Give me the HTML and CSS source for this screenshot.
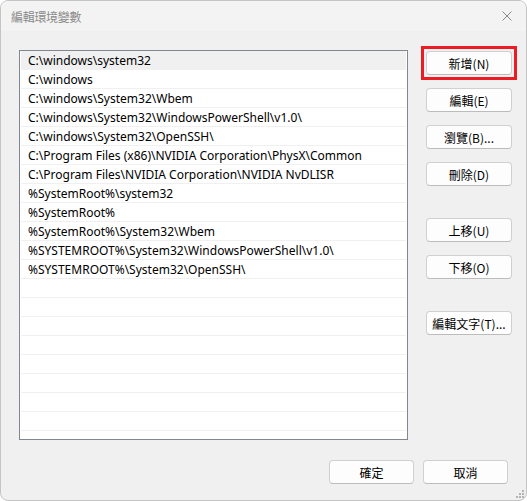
FILE: index.html
```html
<!DOCTYPE html>
<html lang="zh-Hant">
    <head>
        <meta charset="UTF-8">
        <title>編輯環境變數</title>
        <link rel="stylesheet" href="styles.css">
    </head>
    <body>
        <div class="janela">
            <div class="titulo">
                <span>編輯環境變數</span>
                <svg class="fechar" width="10" height="10" viewBox="0 0 10 10">
                    <path d="M0.5 0.5 L9.5 9.5 M9.5 0.5 L0.5 9.5" stroke="#8a8a8a" stroke-width="1" fill="none"/>
                </svg>
            </div>
            <div class="conteudo">
                <div class="principal">
                    <ul class="lista">
                        <li class="selecionado">C:\windows\system32</li>
                        <li>C:\windows</li>
                        <li>C:\windows\System32\Wbem</li>
                        <li>C:\windows\System32\WindowsPowerShell\v1.0\</li>
                        <li>C:\windows\System32\OpenSSH\</li>
                        <li>C:\Program Files (x86)\NVIDIA Corporation\PhysX\Common</li>
                        <li>C:\Program Files\NVIDIA Corporation\NVIDIA NvDLISR</li>
                        <li>%SystemRoot%\system32</li>
                        <li>%SystemRoot%</li>
                        <li>%SystemRoot%\System32\Wbem</li>
                        <li>%SYSTEMROOT%\System32\WindowsPowerShell\v1.0\</li>
                        <li>%SYSTEMROOT%\System32\OpenSSH\</li>
                        <li></li><li></li><li></li><li></li><li></li><li></li><li></li><li></li><li></li>
                    </ul>
                    <div class="botoes">
                        <button class="btn destaque">新增(N)</button>
                        <button class="btn">編輯(E)</button>
                        <button class="btn">瀏覽(B)...</button>
                        <button class="btn">刪除(D)</button>
                        <button class="btn grupo">上移(U)</button>
                        <button class="btn">下移(O)</button>
                        <button class="btn grupo">編輯文字(T)...</button>
                    </div>
                </div>
                <div class="rodape">
                    <button class="btn">確定</button>
                    <button class="btn">取消</button>
                </div>
            </div>
            <svg class="alca" width="8" height="8" viewBox="0 0 8 8">
                <rect x="6" y="0" width="2" height="2" fill="#b4b4b4"/>
                <rect x="3" y="3" width="2" height="2" fill="#b4b4b4"/>
                <rect x="6" y="3" width="2" height="2" fill="#b4b4b4"/>
                <rect x="0" y="6" width="2" height="2" fill="#b4b4b4"/>
                <rect x="3" y="6" width="2" height="2" fill="#b4b4b4"/>
                <rect x="6" y="6" width="2" height="2" fill="#b4b4b4"/>
            </svg>
        </div>
    </body>
</html>
```

FILE: styles.css
```css
body {
    margin: 0;
    padding: 0;
    background-color: #ffffff;
    font-family: "Noto Sans", "Noto Sans CJK TC", sans-serif;
    font-size: 12px;
    color: #000000;
}

.janela {
    position: relative;
    width: 527px;
    height: 501px;
    box-sizing: border-box;
    border: 1px solid #c4c4c4;
    border-radius: 8px;
    background-color: #f0f0f0;
    overflow: hidden;
}

.titulo {
    display: flex;
    justify-content: space-between;
    align-items: center;
    height: 30px;
    padding: 0 14px 0 10px;
    background-color: #f3f3f3;
    color: #8a8a8a;
    font-family: "Noto Sans CJK TC", sans-serif;
    font-size: 12px;
    letter-spacing: -0.3px;
}

.conteudo {
    padding: 19px 0 0 18px;
}

.principal {
    display: flex;
    gap: 18px;
}

.lista {
    flex-shrink: 0;
    list-style: none;
    margin: 0;
    padding: 0 1px 0 1px;
    width: 389px;
    height: 390px;
    box-sizing: border-box;
    border: 1px solid #82878f;
    background-color: #ffffff;
    overflow: hidden;
}

.lista li {
    height: 17px;
    padding-top: 1px;
    line-height: 18px;
    padding-left: 7px;
    border-bottom: 1px solid #f0f0f0;
    white-space: nowrap;
}

.lista li.selecionado {
    background-color: #f0f0f0;
}

.botoes {
    display: flex;
    flex-direction: column;
    gap: 13px;
    padding-top: 1px;
}

.btn {
    flex-shrink: 0;
    width: 86px;
    height: 24px;
    padding: 0;
    border: 1px solid #d0d0d0;
    border-bottom-color: #bcbcbc;
    border-radius: 4px;
    background-color: #fdfdfd;
    font-family: "Noto Sans CJK TC", sans-serif;
    font-size: 12px;
    color: #000000;
}

.btn.grupo {
    margin-top: 19px;
}

.btn.destaque {
    position: relative;
}

/* moldura vermelha por cima do botão */
.btn.destaque::after {
    content: "";
    position: absolute;
    top: -6px;
    left: -6px;
    right: -6px;
    bottom: -6px;
    border: 3px solid #ec1c24;
}

.rodape {
    display: flex;
    justify-content: flex-end;
    gap: 9px;
    padding-top: 20px;
    padding-right: 18px;
}

.rodape .btn {
    width: 85px;
}

.alca {
    position: absolute;
    right: 2px;
    bottom: 2px;
}
```
